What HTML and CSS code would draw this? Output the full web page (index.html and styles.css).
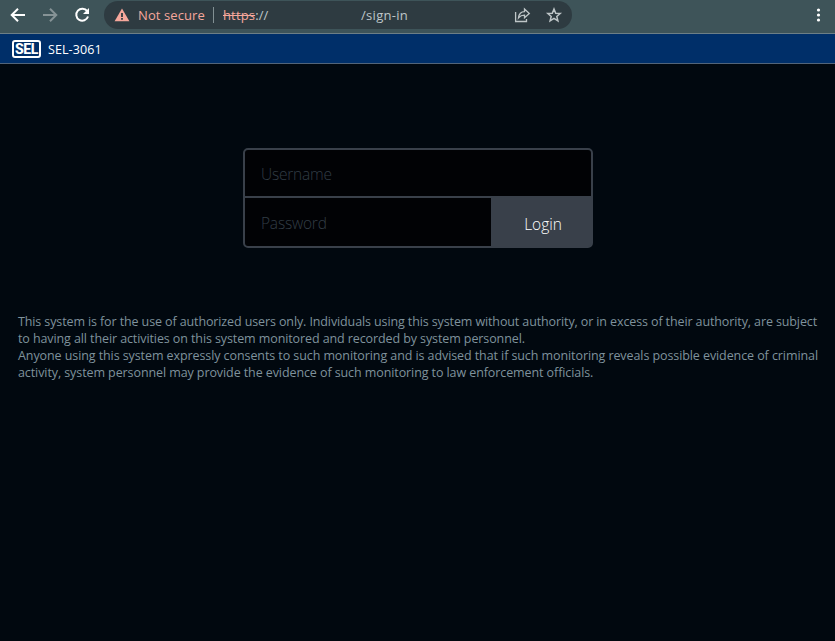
FILE: index.html
```html
<!DOCTYPE html>
<html lang="en">
<head>
<meta charset="utf-8">
<title>SEL-3061</title>
<link rel="stylesheet" href="styles.css">
</head>
<body>
<div class="toolbar">
  <svg class="nav" width="104" height="30" viewBox="0 0 104 30" fill="none" stroke-width="2">
    <path d="M25 15H12M18 8.7L11.7 15L18 21.3" stroke="#fff"/>
    <path d="M43 15H56M50 8.7L56.3 15L50 21.3" stroke="#869396"/>
    <path d="M87.2 11.2A6 6 0 1 0 88 16.5" stroke="#fff"/>
    <path d="M89 8V14H83Z" fill="#fff"/>
  </svg>
  <div class="omnibox">
    <svg class="warn" width="16" height="14" viewBox="0 0 16 14"><path d="M8 .6L15.4 13.2H.6Z" fill="#f6a79c"/><path d="M8 5V9M8 10V11.8" stroke="#2e3b41" stroke-width="1.8"/></svg>
    <span class="insecure">Not secure</span>
    <span class="divider"></span>
    <span class="scheme"><s>https</s>://</span>
    <span class="path">/sign-in</span>
    <svg class="actions" width="50" height="20" viewBox="0 0 50 20" fill="none" stroke="#bfc6c8" stroke-width="1.3">
      <path d="M1.6 7V16.5H12.5V14"/>
      <path d="M4.5 12.8C5 8.5 7.2 6.6 10.5 6.6V4L15.3 8.5L10.5 12.8V10.1C7.8 10.1 6 11 4.5 12.8Z"/>
      <path d="M40 4L41.7 8.2L46.2 8.5L42.8 11.4L43.9 15.8L40 13.4L36.1 15.8L37.2 11.4L33.8 8.5L38.3 8.2Z" stroke-width="1.5"/>
    </svg>
  </div>
  <svg class="more" width="5" height="14" viewBox="0 0 5 14" fill="#fff"><circle cx="2.5" cy="2" r="1.6"/><circle cx="2.5" cy="7" r="1.6"/><circle cx="2.5" cy="12" r="1.6"/></svg>
</div>
<header class="header">
  <span class="logo">SEL</span>
  <span class="device">SEL-3061</span>
</header>
<main>
  <form class="login">
    <input type="text" class="user" placeholder="Username" aria-label="Username">
    <div class="row">
      <input type="password" class="pass" placeholder="Password" aria-label="Password">
      <button type="button">Login</button>
    </div>
  </form>
  <p class="notice">
    <span class="l1">This system is for the use of authorized users only. Individuals using this system without authority, or in excess of their authority, are subject</span>
    <span class="l2">to having all their activities on this system monitored and recorded by system personnel.</span>
    <span class="l3">Anyone using this system expressly consents to such monitoring and is advised that if such monitoring reveals possible evidence of criminal</span>
    <span class="l4">activity, system personnel may provide the evidence of such monitoring to law enforcement officials.</span>
  </p>
</main>
</body>
</html>
```
FILE: styles.css
```css
* { box-sizing: border-box; }
body { margin: 0; height: 641px; overflow: hidden; background: #01080f; font-family: "Open Sans", "Noto Sans", sans-serif; font-size: 13px; }
.toolbar { height: 33px; background: #3e5459; display: flex; align-items: flex-start; }
.nav { flex: none; }
.omnibox { width: 468px; height: 28px; margin-top: 1px; border-radius: 14px; background: #2e3b41; display: flex; align-items: center; padding-left: 10px; color: #bfc6c8; line-height: 28px; white-space: nowrap; }
.warn { margin-right: 8px; flex: none; }
.insecure { width: 75px; color: #f6a79c; letter-spacing: .1px; }
.divider { width: 1px; height: 16px; background: #829093; margin-right: 9px; }
.scheme { width: 138px; letter-spacing: .15px; }
.scheme s { color: #f6a79c; }
.path { width: 153px; letter-spacing: .3px; }
.actions { flex: none; }
.more { margin: 8px 14px 0 auto; }
.header { height: 31px; background: #002f69; border-top: 1px solid #6d7f86; border-bottom: 1px solid #526479; display: flex; align-items: center; padding-left: 12px; color: #fff; }
.logo { width: 29px; height: 18px; border: 2px solid #fff; border-radius: 3px; font: 800 14px/14px Roboto, sans-serif; letter-spacing: -.4px; text-align: center; }
.device { margin: 1px 0 0 7px; font-size: 12.5px; letter-spacing: .1px; }
.login { width: 350px; height: 100px; margin: 84px 0 0 243px; border: 2px solid #39404a; border-radius: 5px; overflow: hidden; background: #39404a; }
input { display: block; border: 0; margin: 0; padding: 2px 16px 0; background: #010205; color: #fff; font: 300 15.5px "Open Sans", sans-serif; letter-spacing: -.2px; outline: 0; }
input::placeholder { color: #323d46; opacity: 1; }
.user { width: 346px; height: 46px; margin-bottom: 2px; }
.row { display: flex; height: 48px; }
.pass { width: 246px; height: 48px; padding-top: 2px; }
button { flex: 1; border: 0; padding: 4px 0 0 4px; background: #39404a; color: #fff; font: 300 15.5px "Open Sans", sans-serif; }
.notice { margin: 65px 0 0 18px; color: #7f929c; font-size: 12.5px; line-height: 17px; }
.notice span { display: block; width: max-content; white-space: nowrap; }
.l1 { letter-spacing: -.114px; }
.l2 { letter-spacing: -.098px; }
.l3 { letter-spacing: -.086px; }
.l4 { letter-spacing: -.09px; }
```
